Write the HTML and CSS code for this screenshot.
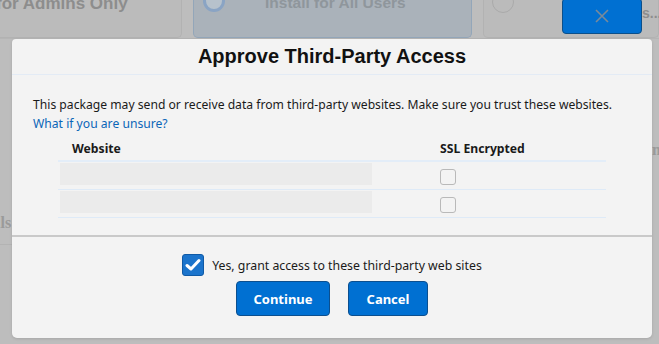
FILE: index.html
```html
<!DOCTYPE html>
<html lang="en">
<head>
    <meta charset="UTF-8">
    <meta name="viewport" content="width=device-width, initial-scale=1.0">
    <title>Approve Third-Party Access</title>
    <link rel="stylesheet" href="styles.css">
</head>
<body>
    <!-- page behind the overlay -->
    <div class="page">
        <div class="options">
            <div class="option option-admins">
                <span class="option-label">for Admins Only</span>
            </div>
            <div class="option option-all">
                <span class="radio"></span>
                <span class="option-label">Install for All Users</span>
            </div>
            <div class="option option-specific">
                <span class="radio radio-plain"></span>
            </div>
            <button class="close-btn" aria-label="Close">
                <svg width="14" height="14" viewBox="0 0 14 14"><path d="M1 1 L13 13 M13 1 L1 13" stroke="#7a8a99" stroke-width="1.6" fill="none"/></svg>
            </button>
            <span class="more">s...</span>
        </div>
        <div class="side side-left">ils</div>
        <div class="side side-right">nb</div>
    </div>

    <div class="modal">
        <div class="modal-header">
            <h2>Approve Third-Party Access</h2>
        </div>
        <div class="modal-body">
            <p>This package may send or receive data from third-party websites. Make sure you trust these websites.<br>
            <a href="#">What if you are unsure?</a></p>
            <table class="sites">
                <thead>
                    <tr>
                        <th class="col-site">Website</th>
                        <th class="col-ssl">SSL Encrypted</th>
                    </tr>
                </thead>
                <tbody>
                    <tr>
                        <td class="col-site"><div class="site-field"></div></td>
                        <td class="col-ssl"><span class="box"></span></td>
                    </tr>
                    <tr>
                        <td class="col-site"><div class="site-field"></div></td>
                        <td class="col-ssl"><span class="box"></span></td>
                    </tr>
                </tbody>
            </table>
        </div>
        <div class="modal-footer">
            <label class="grant">
                <span class="check">
                    <svg width="16" height="14" viewBox="0 0 16 14"><path d="M2 7.5 L6 11 L14 2.5" stroke="#fff" stroke-width="3" fill="none" stroke-linecap="round" stroke-linejoin="round"/></svg>
                </span>
                Yes, grant access to these third-party web sites
            </label>
            <div class="actions">
                <button class="btn btn-continue">Continue</button>
                <button class="btn btn-cancel">Cancel</button>
            </div>
        </div>
    </div>
</body>
</html>
```

FILE: styles.css
```css
body { margin: 0; background-color: #bdbdbd; font-family: "Noto Sans", "Open Sans", sans-serif; color: #1a1a1a; width: 659px; height: 344px; overflow: hidden; position: relative; }

/* background page, greyed by the overlay */
.page { height: 344px; }
.options { display: flex; height: 38px; border-bottom: 1px solid #b5b5b5; position: relative; }
.option { box-sizing: border-box; height: 38px; border: 1px solid #b2b2b2; border-top: none; border-radius: 0 0 5px 5px; background-color: #bbbbbb; display: flex; align-items: flex-start; }
.option-admins { width: 182px; border-left: none; border-radius: 0 0 5px 0; }
.option-all { width: 279px; margin-left: 11px; background-color: #aab2ba; border-color: #93a6b9; }
.option-specific { width: 176px; margin-left: 11px; }
.option-label { font-family: "Liberation Sans", sans-serif; font-weight: bold; font-size: 17px; color: #8d8d8d; line-height: 1; margin-top: -5px; }
.option-admins .option-label { margin-left: -4px; }
.option-all .option-label { margin-left: 40px; font-size: 15.5px; color: #8f969c; }
.radio { width: 16px; height: 16px; border: 3px solid #8aa4c4; border-radius: 50%; margin: -10px 0 0 9px; background-color: #b7c2cc; }
.radio-plain { border: 1px solid #aaaaaa; width: 20px; height: 20px; margin: -9px 0 0 8px; background-color: #bbbbbb; }
.close-btn { position: absolute; left: 562px; top: -2px; width: 80px; height: 36px; background-color: #0070d2; border: 1px solid #0b4f8a; border-radius: 4px; display: flex; align-items: center; justify-content: center; padding: 0; }
.more { position: absolute; left: 642px; top: 5px; font-family: "Liberation Sans", sans-serif; font-weight: bold; font-size: 14px; color: #8d8d8d; }
.side { position: absolute; font-family: "Liberation Serif", serif; font-weight: bold; font-size: 16px; color: #9a9a9a; }
.side-left { left: -4px; top: 214px; width: 16px; overflow: hidden; border-bottom: 1px solid #b3b3b3; height: 30px; }
.side-right { left: 652px; top: 141px; }

/* modal */
.modal { position: absolute; left: 12px; top: 39px; width: 640px; height: 299px; background-color: #f3f3f3; border-radius: 4px 4px 5px 5px; box-shadow: 0 1px 3px rgba(0, 0, 0, 0.12); display: flex; flex-direction: column; }
.modal-header { height: 35px; border-bottom: 1px solid #e3ebf5; display: flex; align-items: center; justify-content: center; }
.modal-header h2 { margin: 0; font-family: "Liberation Sans", sans-serif; font-weight: bold; font-size: 20px; color: #111; }
.modal-body { padding: 20px 0 0 21px; height: 140px; border-bottom: 2px solid #c9c9c9; }
.modal-body p { margin: 0; font-size: 12.15px; line-height: 19px; }
.modal-body a { color: #0b66b8; text-decoration: none; }

.sites { margin: 3px 0 0 25px; border-collapse: collapse; width: 548px; }
.sites th { text-align: left; font-size: 12.2px; font-weight: bold; height: 24px; padding: 0; border-bottom: 2px solid #e3edf8; vertical-align: middle; }
.sites th.col-site { padding-left: 14px; width: 356px; }
.sites th.col-ssl { padding-left: 12px; }
.sites td { padding: 1px 0 4px; border-bottom: 1px solid #deeaf7; vertical-align: middle; }
.sites td.col-ssl { padding-left: 12px; }
.site-field { margin-left: 2px; width: 312px; height: 22px; background-color: #ebebeb; }
.box { display: block; width: 14px; height: 14px; border: 1px solid #b9b9b9; border-radius: 3px; background-color: #f3f3f3; margin-top: 5px; }

.modal-footer { flex-grow: 1; display: flex; flex-direction: column; align-items: center; padding-top: 17px; }
.grant { display: flex; align-items: center; gap: 8px; font-size: 12.3px; cursor: pointer; }
.check { box-sizing: border-box; width: 22px; height: 22px; background-color: #1b74cc; border: 1px solid #0f5aa6; border-radius: 3px; display: flex; align-items: center; justify-content: center; }
.actions { display: flex; gap: 18px; margin-top: 5px; }
.btn { height: 35px; padding: 0; background-color: #0070d2; color: white; border: 1px solid #0b4f8f; border-radius: 4px; font-family: "Noto Sans", sans-serif; font-size: 13px; font-weight: bold; cursor: pointer; }
.btn-continue { width: 94px; }
.btn-cancel { width: 80px; }
```
